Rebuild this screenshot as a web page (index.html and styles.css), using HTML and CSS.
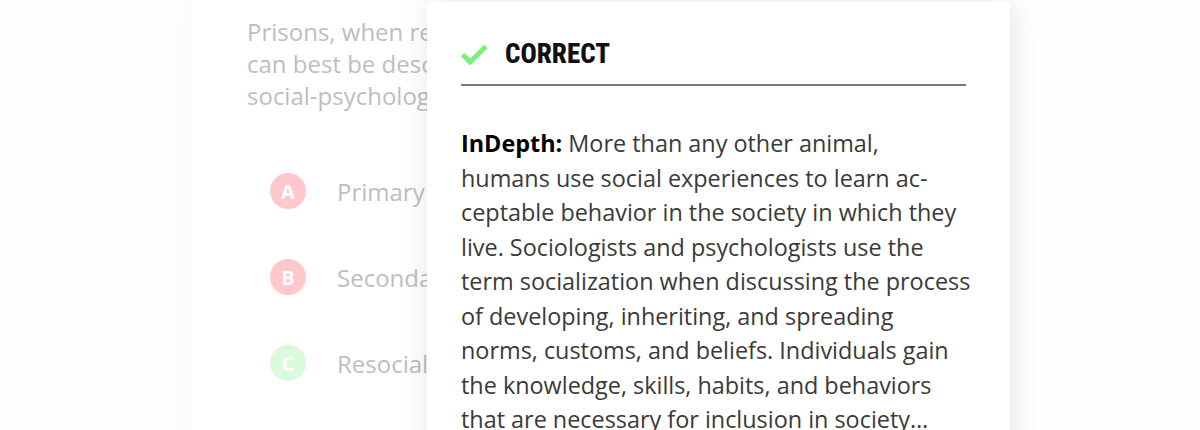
FILE: index.html
```html
<!DOCTYPE html>
<html lang="en">
<head>
<meta charset="utf-8">
<title>Quiz feedback</title>
<link rel="stylesheet" href="styles.css">
</head>
<body>
<div class="stage">
  <section class="question-card">
    <p class="question">Prisons, when regarded as institutions of social control,<br>can best be described as agents of which kind of<br>social-psychological process?</p>
    <ul class="options">
      <li class="option"><span class="badge badge-wrong">A</span><span class="option-text">Primary socialization</span></li>
      <li class="option"><span class="badge badge-wrong">B</span><span class="option-text">Secondary socialization</span></li>
      <li class="option"><span class="badge badge-right">C</span><span class="option-text">Resocialization</span></li>
    </ul>
  </section>

  <aside class="feedback">
    <header class="feedback-head">
      <svg class="check" width="27" height="20" viewBox="0 0 27 20" aria-hidden="true">
        <path d="M1.5 9.5 L9 17 L25 1.5" fill="none" stroke="#7cf07c" stroke-width="5"/>
      </svg>
      <h2 class="feedback-title">CORRECT</h2>
    </header>
    <p class="feedback-body"><strong>InDepth:</strong> More than any other animal,<br>humans use social experiences to learn ac-<br>ceptable behavior in the society in which they<br>live. Sociologists and psychologists use the<br>term socialization when discussing the process<br>of developing, inheriting, and spreading<br>norms, customs, and beliefs. Individuals gain<br>the knowledge, skills, habits, and behaviors<br>that are necessary for inclusion in society…</p>
  </aside>
</div>
</body>
</html>
```

FILE: styles.css
```css
* { box-sizing: border-box; }

html, body {
  margin: 0;
  padding: 0;
  background: #ffffff;
}

body {
  font-family: "Open Sans", "Liberation Sans", sans-serif;
}

.stage {
  position: relative;
  width: 1200px;
  height: 430px;
  overflow: hidden;
  background: #fefefe;
}

.question-card {
  width: 816px;
  height: 470px;
  margin: 0 auto;
  padding: 16px 55px 0;
  background: #ffffff;
  box-shadow: 0 0 40px rgba(0, 0, 0, 0.035);
}

.question {
  margin: 0;
  font-size: 24px;
  line-height: 32px;
  color: #bebebe;
  white-space: nowrap;
}

.options {
  list-style: none;
  margin: 61px 0 0;
  padding: 0 0 0 23px;
  display: flex;
  flex-direction: column;
  gap: 50px;
}

.option {
  display: flex;
  align-items: center;
  gap: 31px;
  height: 36px;
}

.badge {
  width: 36px;
  height: 36px;
  border-radius: 50%;
  display: flex;
  align-items: center;
  justify-content: center;
  color: #ffffff;
  font-weight: 700;
  font-size: 20px;
  flex: none;
}

.badge-wrong { background: #ffc8cc; }
.badge-right { background: #dbfadb; }

.option-text {
  font-size: 24px;
  color: #bebebe;
  white-space: nowrap;
}

.feedback {
  position: absolute;
  left: 427px;
  top: 2px;
  width: 583px;
  height: 460px;
  padding: 37px 44px 0 34px;
  background: #ffffff;
  border-radius: 3px;
  box-shadow: 0 0 30px rgba(0, 0, 0, 0.09);
}

.feedback-head {
  display: flex;
  align-items: center;
  gap: 17px;
  padding-bottom: 15px;
  border-bottom: 2px solid #7a7a7a;
}

.check {
  display: block;
  margin-top: 1px;
}

.feedback-title {
  margin: 0;
  font-family: "Roboto", sans-serif;
  font-stretch: condensed;
  font-weight: 800;
  font-size: 27px;
  line-height: 30px;
  color: #111111;
}

.feedback-body {
  margin: 40px 0 0;
  font-size: 23.4px;
  line-height: 34.5px;
  color: #3a3a3a;
  white-space: nowrap;
}

.feedback-body strong {
  color: #000000;
  font-weight: 700;
}
```
